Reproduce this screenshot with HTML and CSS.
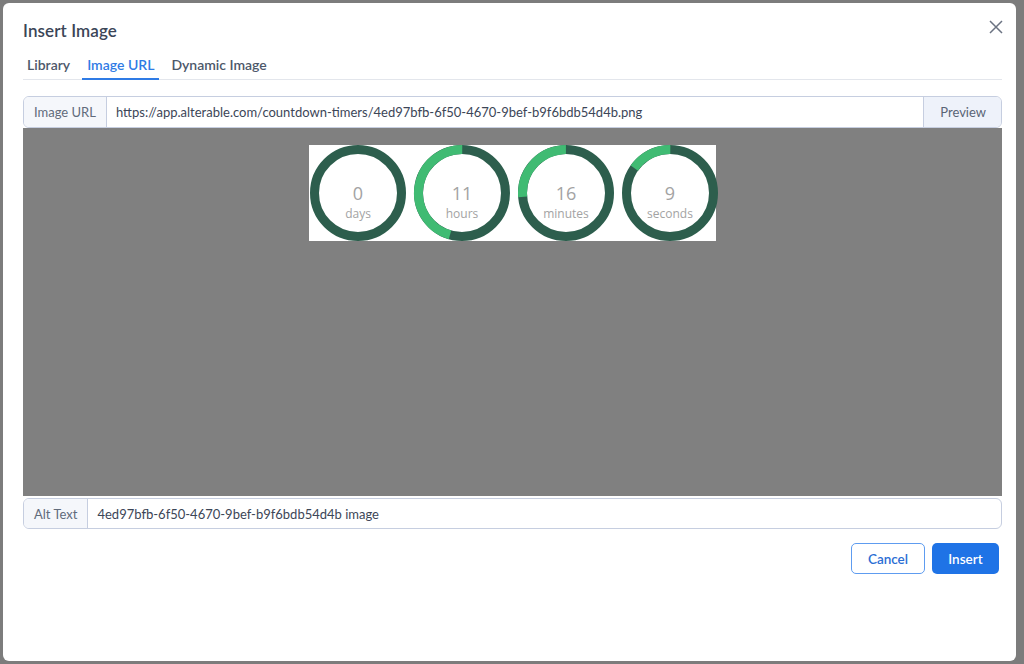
FILE: index.html
```html
<!doctype html>
<html>
  <head>
    <link rel="stylesheet" href="styles.css">
  </head>
  <body>
    <div class="modal">
      <div class="modal-head">
        <div class="modal-title">Insert Image</div>
        <div class="close-btn">
          <svg width="14" height="14" viewBox="0 0 14 14"><path d="M1 1L13 13M13 1L1 13" stroke="#6b7382" stroke-width="1.5" fill="none"/></svg>
        </div>
      </div>

      <div class="tabs">
        <div class="tab">Library</div>
        <div class="tab active">Image URL</div>
        <div class="tab">Dynamic Image</div>
      </div>

      <div class="input-group">
        <div class="addon">Image URL</div>
        <div class="field">https://app.alterable.com/countdown-timers/4ed97bfb-6f50-4670-9bef-b9f6bdb54d4b.png</div>
        <div class="addon btn-addon">Preview</div>
      </div>

      <div class="preview-area">
        <div class="timer">
          <div class="dial">
            <svg width="98" height="98" viewBox="0 0 98 98">
              <circle cx="49" cy="49" r="43.5" class="ring-dark"/>
            </svg>
            <div class="dial-text"><span class="num">0</span><span class="unit">days</span></div>
          </div>
          <div class="dial">
            <svg width="98" height="98" viewBox="0 0 98 98">
              <circle cx="49" cy="49" r="43.5" class="ring-dark"/>
              <circle cx="49" cy="49" r="43.5" class="ring-light" stroke-dasharray="124.5 273.3" transform="rotate(106 49 49)"/>
            </svg>
            <div class="dial-text"><span class="num">11</span><span class="unit">hours</span></div>
          </div>
          <div class="dial">
            <svg width="98" height="98" viewBox="0 0 98 98">
              <circle cx="49" cy="49" r="43.5" class="ring-dark"/>
              <circle cx="49" cy="49" r="43.5" class="ring-light" stroke-dasharray="72 273.3" transform="rotate(175 49 49)"/>
            </svg>
            <div class="dial-text"><span class="num">16</span><span class="unit">minutes</span></div>
          </div>
          <div class="dial">
            <svg width="98" height="98" viewBox="0 0 98 98">
              <circle cx="49" cy="49" r="43.5" class="ring-dark"/>
              <circle cx="49" cy="49" r="43.5" class="ring-light" stroke-dasharray="42 273.3" transform="rotate(215 49 49)"/>
            </svg>
            <div class="dial-text"><span class="num">9</span><span class="unit">seconds</span></div>
          </div>
        </div>
      </div>

      <div class="input-group alt-group">
        <div class="addon">Alt Text</div>
        <div class="field">4ed97bfb-6f50-4670-9bef-b9f6bdb54d4b image</div>
      </div>

      <div class="modal-foot">
        <div class="btn btn-outline">Cancel</div>
        <div class="btn btn-primary">Insert</div>
      </div>
    </div>
  </body>
</html>
```
FILE: styles.css
```css
html, body {
  margin: 0;
  height: 100%;
}

body {
  background-color: #7c7c7c;
  padding: 3px 0 0 3px;
  box-sizing: border-box;
  font-family: Lato, "Noto Sans", sans-serif;
  color: #3c4657;
}

.modal {
  width: 1013px;
  height: 658px;
  box-sizing: border-box;
  background: #fff;
  border-radius: 6px;
  padding: 0 14px 0 20px;
}

.modal-head {
  display: flex;
  justify-content: space-between;
  align-items: center;
  height: 52px;
  padding-top: 3px;
  box-sizing: border-box;
}

.modal-title {
  font-size: 17px;
  font-weight: 600;
  color: #3b4557;
  letter-spacing: 0.1px;
}

.close-btn {
  width: 14px;
  height: 14px;
  margin-right: -1px;
  margin-top: -8px;
}

.close-btn svg {
  display: block;
}

.tabs {
  display: flex;
  gap: 7px;
  border-bottom: 1px solid #e3e6ec;
  height: 24px;
  margin-bottom: 16px;
}

.tab {
  font-size: 14px;
  font-weight: 600;
  color: #4d586a;
  padding: 1px 5px 0 5px;
  box-sizing: border-box;
}

.tab:first-child {
  margin-left: -1px;
}

.tab.active {
  color: #2f7be5;
  border-bottom: 2px solid #2f7be5;
  margin-bottom: -1px;
}

.input-group {
  display: flex;
  height: 32px;
  border: 1px solid #c6cee0;
  border-radius: 6px;
  box-sizing: border-box;
  overflow: hidden;
  font-size: 13px;
}

.addon {
  display: flex;
  align-items: center;
  padding: 0 10px;
  background: #f5f7fb;
  color: #616b7b;
  border-right: 1px solid #c6cee0;
}

.field {
  flex: 1;
  display: flex;
  align-items: center;
  padding: 0 9px;
  color: #3c4657;
}

.btn-addon {
  border-right: none;
  border-left: 1px solid #c6cee0;
  background: #eef2fa;
  padding: 0 15px 0 16px;
  color: #596476;
}

.preview-area {
  height: 368px;
  background: #808080;
  display: flex;
  justify-content: center;
  align-items: flex-start;
  padding-top: 17px;
  box-sizing: border-box;
  margin-bottom: 2px;
}

.timer {
  background: #fff;
  width: 407px;
  height: 96px;
  display: flex;
  align-items: center;
  gap: 6px;
  box-sizing: border-box;
}

.dial {
  position: relative;
  width: 98px;
  height: 98px;
}

.dial svg {
  display: block;
}

.ring-dark {
  fill: none;
  stroke: #2d5e4d;
  stroke-width: 9;
}

.ring-light {
  fill: none;
  stroke: #40bb73;
  stroke-width: 9;
}

.dial-text {
  position: absolute;
  inset: 0;
  display: flex;
  flex-direction: column;
  align-items: center;
  font-family: "Open Sans", sans-serif;
  color: #a3a3a3;
  padding-top: 39px;
}

.num {
  font-size: 18px;
  line-height: 20px;
}

.unit {
  font-size: 12px;
  line-height: 22px;
}

.alt-group {
  height: 31px;
}

.modal-foot {
  display: flex;
  justify-content: flex-end;
  gap: 7px;
  margin-top: 14px;
  padding-right: 3px;
}

.btn {
  height: 31px;
  box-sizing: border-box;
  border-radius: 5px;
  display: flex;
  align-items: center;
  justify-content: center;
  font-size: 13.5px;
  font-weight: 600;
}

.btn-outline {
  width: 74px;
  border: 1px solid #5e9cf0;
  color: #2b6ed4;
}

.btn-primary {
  width: 67px;
  background: #1f73e6;
  color: #fff;
}
```
